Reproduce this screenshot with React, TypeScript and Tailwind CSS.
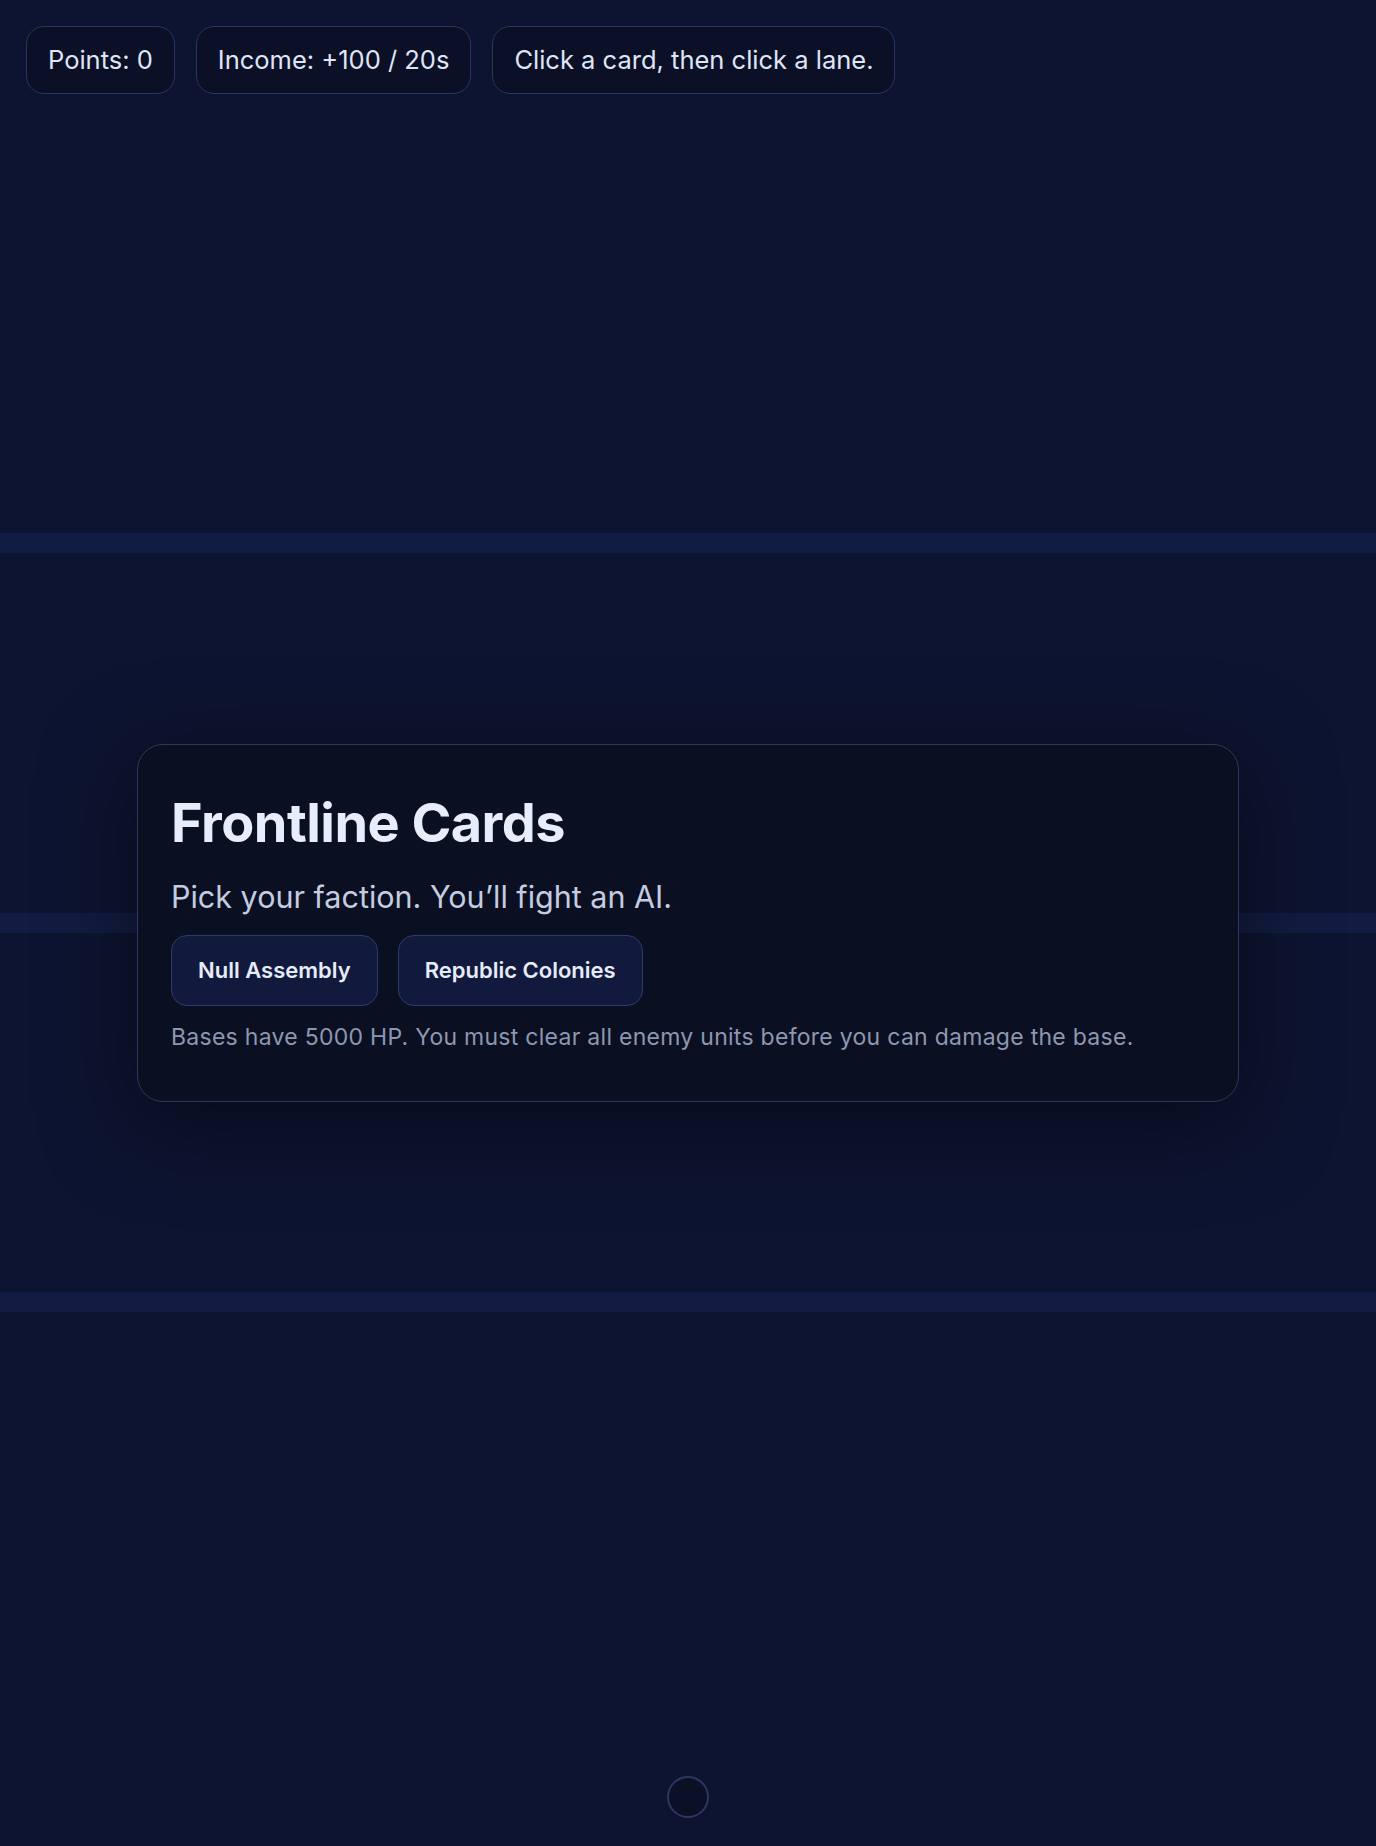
import React from "react";

const stats = ["Points: 0", "Income: +100 / 20s", "Click a card, then click a lane."];
const factions = ["Null Assembly", "Republic Colonies"];

function Lane({ className }: { className: string }) {
  return <div className={className} />;
}

export default function App() {
  return (
    <div
      className="relative flex h-[1846px] w-full flex-col overflow-hidden bg-[#0d1431] text-[#e8edfb]"
      style={{ fontFamily: "Inter, 'Noto Sans', sans-serif" }}
    >
      {/* top lane + hud */}
      <div className="h-[533px] shrink-0">
        <div className="flex gap-[21px] p-[26px]">
          {stats.map((s) => (
            <div
              key={s}
              className="rounded-[18px] border border-[#2c355c] bg-[#0b1027] px-[21px] py-[17px] text-[25.5px] leading-[32px] text-[#dfe5f5]"
            >
              {s}
            </div>
          ))}
        </div>
      </div>
      <Lane className="h-[20px] shrink-0 bg-[#121c42]" />
      <Lane className="h-[360px] shrink-0" />
      <Lane className="h-[20px] shrink-0 bg-[#121c42]" />
      <Lane className="h-[359px] shrink-0" />
      <Lane className="h-[20px] shrink-0 bg-[#121c42]" />

      {/* hand area */}
      <div className="flex flex-1 items-end justify-center pb-[28px]">
        <div className="h-[42px] w-[42px] rounded-full border-2 border-[#2c365e] bg-[#0b1027]" />
      </div>

      {/* faction picker overlay */}
      <div className="absolute inset-0 flex items-center justify-center">
        <div className="w-[1102px] rounded-[26px] border border-[#2e375c] bg-[#0a0f22] px-[33px] pb-[47px] pt-[48px] shadow-[0_20px_90px_rgba(0,0,0,0.5)]">
          <h1 className="text-[54px] font-bold leading-[1.1] tracking-[-0.01em] text-[#e8edfb]">Frontline Cards</h1>
          <p className="mt-[21px] text-[30.5px] leading-[48px] text-[#c5cce0]">Pick your faction. You’ll fight an AI.</p>
          <div className="mt-[14px] flex gap-[20px]">
            {factions.map((f) => (
              <button
                key={f}
                className="rounded-[16px] border border-[#2e3a6a] bg-[#111a3d] px-[26px] py-[20px] text-[22px] font-semibold leading-[29px] text-[#e6ebf8]"
              >
                {f}
              </button>
            ))}
          </div>
          <p className="mt-[15px] text-[23px] leading-[33px] tracking-[0.012em] text-[#8e97b0]">
            Bases have 5000 HP. You must clear all enemy units before you can damage the base.
          </p>
        </div>
      </div>
    </div>
  );
}
